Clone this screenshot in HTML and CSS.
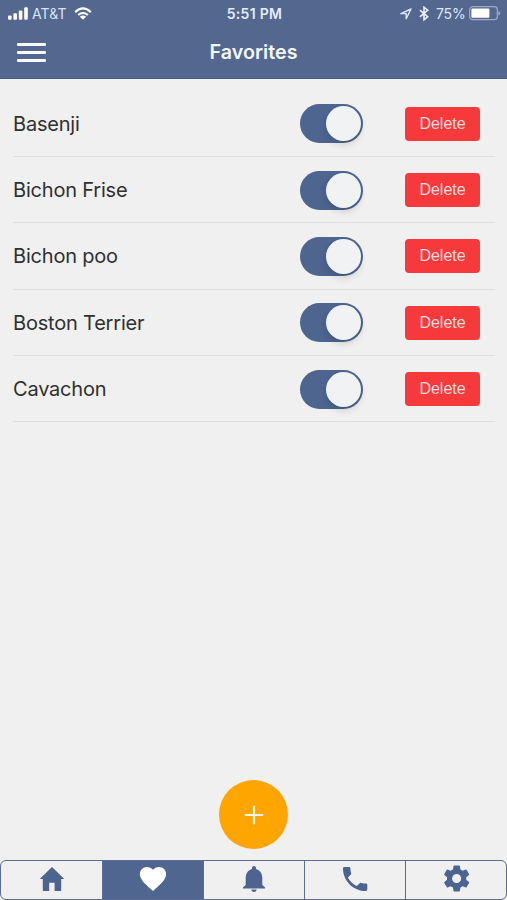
FILE: index.html
```html
<!DOCTYPE html>
<html lang="en">
<head>
<meta charset="utf-8">
<title>Favorites</title>
<link rel="stylesheet" href="styles.css">
</head>
<body>
<div class="app">
  <header class="header">
    <div class="status">
      <div class="status-left">
        <svg class="signal" width="20" height="13" viewBox="0 0 20 13"><rect x="0" y="8.5" width="3.6" height="4.2" rx="1"/><rect x="5.4" y="6.3" width="3.6" height="6.4" rx="1"/><rect x="10.8" y="3.5" width="3.6" height="9.2" rx="1"/><rect x="16.2" y="0.3" width="3.6" height="12.4" rx="1"/></svg>
        <span class="carrier">AT&amp;T</span>
        <svg class="wifi" width="18" height="13" viewBox="0 0 18 13"><path d="M1.2 5.1Q9-2.2 16.8 5.1M4.1 8Q9 3.6 13.9 8"/><path class="dot" d="M5.8 9.7Q9 7.3 12.2 9.7L9 12.8Z"/></svg>
      </div>
      <span class="time">5:51 PM</span>
      <div class="status-right">
        <svg class="location" width="12" height="12" viewBox="0 0 12 12"><path d="M11 1L.9 5.6H6.2V10.8Z"/></svg>
        <svg class="bluetooth" width="10" height="15" viewBox="0 0 10 15"><path d="M.9 4.1L8.7 10.7L5 13.8V1.2L8.7 4.2L.9 10.9"/></svg>
        <span class="percent">75%</span>
        <svg class="battery" width="32" height="15" viewBox="0 0 32 15"><rect class="case" x=".7" y=".7" width="27.6" height="13" rx="3"/><rect class="charge" x="2.4" y="2.6" width="18" height="9.2" rx="1"/><path class="cap" d="M29.4 5v4.6q1.8-.7 1.8-2.3T29.4 5Z"/></svg>
      </div>
    </div>
    <div class="titlebar">
      <div class="menu"><i></i><i></i><i></i></div>
      <h1>Favorites</h1>
    </div>
  </header>

  <main class="list">
    <div class="row"><span class="name">Basenji</span><span class="toggle"><i></i></span><button class="delete">Delete</button></div>
    <div class="row"><span class="name">Bichon Frise</span><span class="toggle"><i></i></span><button class="delete">Delete</button></div>
    <div class="row"><span class="name">Bichon poo</span><span class="toggle"><i></i></span><button class="delete">Delete</button></div>
    <div class="row"><span class="name">Boston Terrier</span><span class="toggle"><i></i></span><button class="delete">Delete</button></div>
    <div class="row"><span class="name">Cavachon</span><span class="toggle"><i></i></span><button class="delete">Delete</button></div>
  </main>

  <div class="add"><svg width="20" height="20" viewBox="0 0 20 20"><path d="M10 .8V19.2M.8 10H19.2"/></svg></div>

  <nav class="tabs">
    <div class="tab"><svg width="30" height="30" viewBox="0 0 30 30"><path d="M15 3L27.3 15H24.2V27H17.6V18.8H12.2V27H5.8V15H2.7Z"/></svg></div>
    <div class="tab active"><svg width="30" height="30" viewBox="0 0 30 30"><path d="M15 27L13.1 25.3C6.4 19.2 1.9 15.2 1.9 10.2C1.9 6.1 5 3 9.1 3C11.4 3 13.6 4.1 15 5.8C16.4 4.1 18.6 3 20.9 3C25 3 28.1 6.1 28.1 10.2C28.1 15.2 23.6 19.2 16.9 25.3Z"/></svg></div>
    <div class="tab"><svg width="30" height="30" viewBox="0 0 30 30"><path d="M15 28C16.5 28 17.6 27 17.6 25.6H12.4C12.4 27 13.5 28 15 28ZM23.3 20.9V13.6C23.3 9.3 20.7 5.9 17 4.9V4C17 2.8 16.1 2 15 2S13 2.8 13 4V4.9C9.3 5.9 6.7 9.3 6.7 13.6V20.9L3.9 23.4V24.5H26.1V23.4Z"/></svg></div>
    <div class="tab"><svg width="30" height="30" viewBox="0 0 30 30"><path d="M7.9 13.4C9.9 17.2 13 20.2 16.8 22.1L19.7 19.2C20.1 18.8 20.6 18.7 21.1 18.9C22.6 19.4 24.2 19.6 25.9 19.6C26.7 19.6 27.3 20.2 27.3 21V25.6C27.3 26.4 26.7 27 25.9 27C13.2 27 3 16.8 3 4.4C3 3.6 3.6 3 4.4 3H9.1C9.8 3 10.4 3.6 10.4 4.4C10.4 6.1 10.7 7.7 11.2 9.2C11.4 9.7 11.2 10.2 10.9 10.6Z"/></svg></div>
    <div class="tab"><svg width="31" height="31" viewBox="0 0 24 24"><path d="M19.5 12.98c.04-.32.07-.64.07-.98s-.03-.66-.07-.98l2.18-1.65c.19-.15.24-.42.12-.64l-2-3.46c-.12-.22-.39-.3-.61-.22l-2.49 1c-.52-.4-1.08-.73-1.69-.98l-.38-2.65A.49.49 0 0 0 14.14 2h-4c-.25 0-.46.18-.49.42l-.38 2.65c-.61.25-1.17.59-1.69.98l-2.49-1c-.23-.09-.49 0-.61.22l-2 3.46c-.13.22-.07.49.12.64l2.11 1.65c-.04.32-.07.65-.07.98s.03.66.07.98L2.6 14.63c-.19.15-.24.42-.12.64l2 3.46c.12.22.39.3.61.22l2.49-1c.52.4 1.08.73 1.69.98l.38 2.65c.03.24.24.42.49.42h4c.25 0 .46-.18.49-.42l.38-2.65c.61-.25 1.17-.59 1.69-.98l2.49 1c.23.09.49 0 .61-.22l2-3.46c.12-.22.07-.49-.12-.64ZM12.1 15.5a3.5 3.5 0 1 1 0-7 3.5 3.5 0 0 1 0 7Z"/></svg></div>
  </nav>
</div>
</body>
</html>
```
FILE: styles.css
```css
* { box-sizing: border-box; }
body { margin: 0; background: #f0f0f0; font-family: Inter, "Liberation Sans", sans-serif; }
svg { display: block; flex: none; }
.app { height: 900px; display: flex; flex-direction: column; overflow: hidden; }
.header { height: 79px; flex: none; background: #53678f; border-bottom: 1px solid #465b88; color: #f2f7ff; }
.status { height: 27px; display: grid; grid-template-columns: 1fr auto 1fr; align-items: center; padding: 0 6px 0 8px; }
.status-left, .status-right { display: flex; align-items: center; }
.status-right { justify-content: flex-end; }
.signal, .dot { fill: #fff; }
.carrier { margin-left: 4px; width: 35px; font-size: 14px; letter-spacing: .1px; color: #d9e3f5; white-space: nowrap; }
.wifi { margin-left: 7px; fill: none; stroke: #fff; stroke-width: 2.2; }
.wifi .dot { fill: #fff; stroke: none; }
.time { font-size: 14px; font-weight: 600; letter-spacing: .3px; color: #e3edfc; }
.location { fill: none; stroke: #dce8fa; stroke-width: 1.4; stroke-linejoin: round; }
.bluetooth { margin-left: 7px; fill: none; stroke: #e8f1ff; stroke-width: 1.6; }
.percent { margin-left: 7px; width: 29px; font-size: 14px; letter-spacing: -.2px; color: #dce8fa; }
.battery { margin-left: 4px; }
.case { fill: none; stroke: #9daac5; stroke-width: 1.2; }
.charge { fill: #fff; }
.cap { fill: #9daac5; }
.titlebar { height: 50px; display: grid; grid-template-columns: 1fr auto 1fr; align-items: center; padding: 0 17px; }
.menu { width: 29px; display: flex; flex-direction: column; gap: 5px; padding-top: 1px; }
.menu i { height: 3px; background: #f8fbff; border-radius: 1px; }
h1 { margin: 0; font-size: 19.7px; line-height: 24px; font-weight: 600; letter-spacing: .05px; }
.list { flex: 1; padding: 11.5px 12px 0 13px; }
.row { height: 66.4px; display: grid; grid-template-columns: 287px 105px 75px; align-items: center; padding-top: 1px; border-bottom: 1px solid #dedede; }
.name { font-size: 20px; line-height: 26px; letter-spacing: -.2px; color: #303030; white-space: nowrap; }
.toggle { width: 63px; height: 39px; padding: 2px; border-radius: 20px; background: #4d658f; display: flex; justify-content: flex-end; }
.toggle i { width: 35px; height: 35px; border-radius: 50%; background: #f0f2f4; box-shadow: 0 4px 7px rgba(0,0,0,.13); }
.delete { width: 75px; height: 34px; padding: 0; border: 0; border-radius: 4px; background: #f6393b; color: #ffdcdc; font: 16px "Liberation Sans", Arial, sans-serif; }
.add { width: 69px; height: 69px; flex: none; margin: 0 auto 11px; border-radius: 50%; background: #fea500; display: grid; place-items: center; }
.add path { fill: none; stroke: #fff8df; stroke-width: 2.2; }
.tabs { height: 40px; flex: none; display: grid; grid-template-columns: 102px 101px 101px 101px 1fr; border: 1.5px solid #5b6d92; border-radius: 6px; overflow: hidden; }
.tab { display: grid; place-items: center; padding-bottom: 3px; border-right: 1.5px solid #5b6d92; }
.tab:last-child { border-right: 0; }
.tab svg { fill: #4e6490; }
.tab.active { background: #4f6690; }
.tab.active svg { fill: #fff; }
```
